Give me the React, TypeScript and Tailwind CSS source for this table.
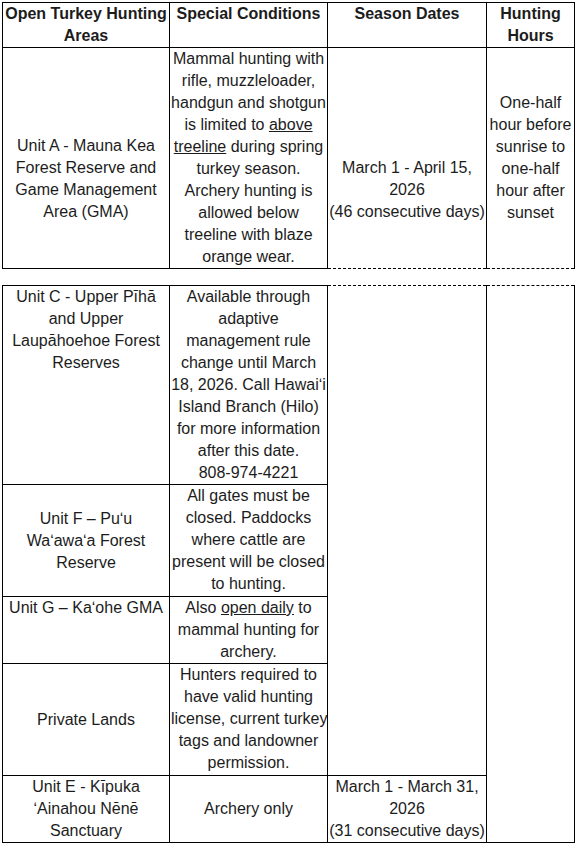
import React from 'react';

const cell = 'border border-black px-px text-center';
const lines = 'whitespace-nowrap';

function Cols() {
  return (
    <colgroup>
      <col className="w-[167px]" />
      <col className="w-[158px]" />
      <col className="w-[159px]" />
      <col className="w-[88px]" />
    </colgroup>
  );
}

function Lines({ items }: { items: React.ReactNode[] }) {
  return (
    <>
      {items.map((t, i) => (
        <React.Fragment key={i}>
          {i > 0 && <br />}
          {t}
        </React.Fragment>
      ))}
    </>
  );
}

export default function App() {
  return (
    <div className="bg-white min-h-[853px] pt-[2px] pl-[2px] font-['Liberation_Sans',Arial,sans-serif] text-[16px] leading-[22px] text-[#1c1c1c]">
      {/* first table: header + Unit A */}
      <table className="table-fixed border-collapse w-[572px]">
        <Cols />
        <thead>
          <tr>
            <th className={`${cell} align-top font-bold`}>Open Turkey Hunting Areas</th>
            <th className={`${cell} align-top font-bold`}>Special Conditions</th>
            <th className={`${cell} align-top font-bold`}>Season Dates</th>
            <th className={`${cell} align-top font-bold`}>Hunting Hours</th>
          </tr>
        </thead>
        <tbody>
          <tr>
            <td className={`${cell} align-bottom pb-[45px]`}>
              Unit A - Mauna Kea Forest Reserve and Game Management Area (GMA)
            </td>
            <td className={`${cell} ${lines} align-top`}>
              <Lines
                items={[
                  'Mammal hunting with',
                  'rifle, muzzleloader,',
                  'handgun and shotgun',
                  <>
                    is limited to <span className="underline">above</span>
                  </>,
                  <>
                    <span className="underline">treeline</span> during spring
                  </>,
                  'turkey season.',
                  'Archery hunting is',
                  'allowed below',
                  'treeline with blaze',
                  'orange wear.',
                ]}
              />
            </td>
            <td className={`${cell} ${lines} align-bottom pb-[45px] [border-bottom-style:dashed]`}>
              March 1 - April 15,
              <br />
              2026
              <br />
              (46 consecutive days)
            </td>
            <td className={`${cell} align-middle [border-bottom-style:dashed]`}>
              One-half hour before sunrise to one-half hour after sunset
            </td>
          </tr>
        </tbody>
      </table>

      {/* second table */}
      <table className="table-fixed border-collapse w-[572px] mt-[16px]">
        <Cols />
        <tbody>
          <tr>
            <td className={`${cell} align-top`}>Unit C - Upper Pīhā and Upper Laupāhoehoe Forest Reserves</td>
            <td className={`${cell} ${lines} align-top`}>
              <Lines
                items={[
                  'Available through',
                  'adaptive',
                  'management rule',
                  'change until March',
                  '18, 2026. Call Hawaiʻi',
                  'Island Branch (Hilo)',
                  'for more information',
                  'after this date.',
                  '808-974-4221',
                ]}
              />
            </td>
            <td rowSpan={4} className={`${cell} [border-top-style:dashed]`}></td>
            <td rowSpan={5} className={`${cell} [border-top-style:dashed]`}></td>
          </tr>
          <tr>
            <td className={`${cell} align-middle`}>Unit F – Puʻu Waʻawaʻa Forest Reserve</td>
            <td className={`${cell} ${lines} align-top pb-px`}>
              <Lines
                items={[
                  'All gates must be',
                  'closed. Paddocks',
                  'where cattle are',
                  'present will be closed',
                  'to hunting.',
                ]}
              />
            </td>
          </tr>
          <tr>
            <td className={`${cell} ${lines} align-top`}>Unit G – Kaʻohe GMA</td>
            <td className={`${cell} ${lines} align-top`}>
              <Lines
                items={[
                  <>
                    Also <span className="underline">open daily</span> to
                  </>,
                  'mammal hunting for',
                  'archery.',
                ]}
              />
            </td>
          </tr>
          <tr>
            <td className={`${cell} align-middle`}>Private Lands</td>
            <td className={`${cell} ${lines} align-top pb-px`}>
              <Lines
                items={[
                  'Hunters required to',
                  'have valid hunting',
                  'license, current turkey',
                  'tags and landowner',
                  'permission.',
                ]}
              />
            </td>
          </tr>
          <tr>
            <td className={`${cell} align-middle`}>
              Unit E - Kīpuka
              <br />
              ʻAinahou Nēnē
              <br />
              Sanctuary
            </td>
            <td className={`${cell} align-middle`}>Archery only</td>
            <td className={`${cell} ${lines} align-middle`}>
              March 1 - March 31,
              <br />
              2026
              <br />
              (31 consecutive days)
            </td>
          </tr>
        </tbody>
      </table>
    </div>
  );
}
